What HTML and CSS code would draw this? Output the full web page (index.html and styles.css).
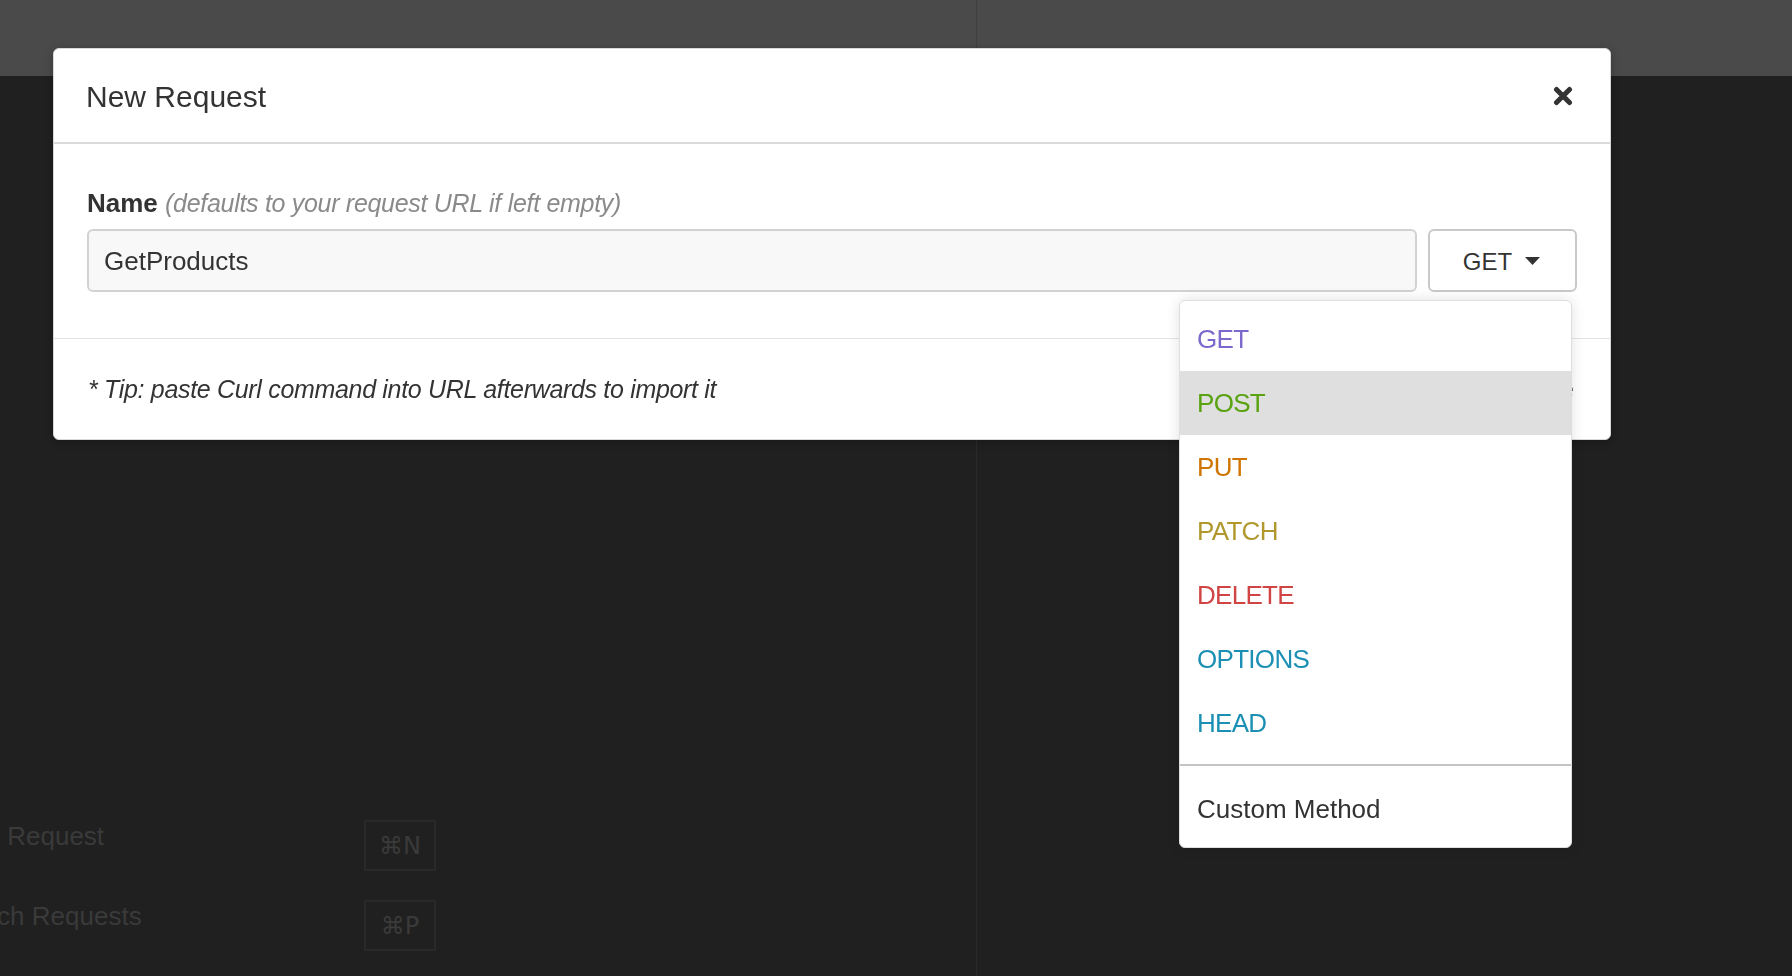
FILE: index.html
```html
<!DOCTYPE html>
<html lang="en">
<head>
<meta charset="utf-8">
<title>New Request</title>
<link rel="stylesheet" href="styles.css">
</head>
<body>
<div class="app">
  <section class="pane pane-left">
    <div class="pane-head"></div>
    <div class="pane-body">
      <div class="shortcuts">
        <div class="shortcut">
          <span class="shortcut-label">New Request</span>
          <span class="shortcut-key">⌘N</span>
        </div>
        <div class="shortcut">
          <span class="shortcut-label">Switch Requests</span>
          <span class="shortcut-key">⌘P</span>
        </div>
      </div>
    </div>
  </section>
  <section class="pane pane-right">
    <div class="pane-head"></div>
    <div class="pane-body"></div>
  </section>
</div>

<div class="overlay">
  <div class="modal">
    <header class="modal-head">
      <h1 class="modal-title">New Request</h1>
      <button class="modal-close" aria-label="Close">
        <svg width="20" height="20" viewBox="0 0 20 20"><path d="M3.5 3.5 L16.5 16.5 M16.5 3.5 L3.5 16.5" stroke="#333" stroke-width="5" stroke-linecap="round" fill="none"/></svg>
      </button>
    </header>
    <div class="modal-body">
      <label class="field-label"><strong>Name</strong> <em>(defaults to your request URL if left empty)</em></label>
      <div class="field-row">
        <div class="name-input">GetProducts</div>
        <div class="method-wrap">
          <button class="method-btn">GET <svg class="caret" width="15" height="8" viewBox="0 0 15 8"><path d="M0 0 H15 L7.5 8 Z" fill="#333"/></svg></button>
          <ul class="method-menu">
            <li class="m-get">GET</li>
            <li class="m-post active">POST</li>
            <li class="m-put">PUT</li>
            <li class="m-patch">PATCH</li>
            <li class="m-delete">DELETE</li>
            <li class="m-options">OPTIONS</li>
            <li class="m-head">HEAD</li>
            <li class="menu-sep"></li>
            <li class="m-custom">Custom Method</li>
          </ul>
        </div>
      </div>
    </div>
    <footer class="modal-foot">
      <span class="tip">* Tip: paste Curl command into URL afterwards to import it</span>
      <button class="create-btn">Create</button>
    </footer>
  </div>
</div>
</body>
</html>
```

FILE: styles.css
```css
* { box-sizing: border-box; }

html, body {
  margin: 0;
  padding: 0;
  width: 1792px;
  height: 976px;
  overflow: hidden;
  background: #202020;
  font-family: "Liberation Sans", Arial, sans-serif;
  color: #333;
}

.app {
  display: flex;
  height: 976px;
}

.pane {
  display: flex;
  flex-direction: column;
}

.pane-left {
  width: 977px;
}

.pane-right {
  flex: 1;
}

.pane-head {
  height: 76px;
  background: #4a4a4a;
}

.pane-left .pane-head {
  border-right: 1px solid #3f3f3f;
}

.pane-body {
  flex: 1;
  background: #202020;
}

.pane-left .pane-body {
  border-right: 1px solid #2a2a2a;
  overflow: hidden;
  padding-top: 744px;
}

.shortcuts {
  display: flex;
  flex-direction: column;
  gap: 29px;
  margin-left: -52px;
}

.shortcut {
  display: flex;
  align-items: flex-start;
}

.shortcut-label {
  width: 416px;
  font-size: 26px;
  line-height: 32px;
  color: #3a3a3a;
  white-space: nowrap;
}

.shortcut-key {
  width: 72px;
  height: 51px;
  border: 2px solid #292929;
  display: flex;
  align-items: center;
  justify-content: center;
  font-family: "DejaVu Sans", "Liberation Sans", sans-serif;
  font-size: 24px;
  color: #3a3a3a;
}

/* Modal */
.overlay {
  position: fixed;
  inset: 0;
  padding: 48px 0 0 53px;
}

.modal {
  position: relative;
  width: 1558px;
  background: #fff;
  border: 1px solid #d9d9d9;
  border-radius: 6px;
  box-shadow: 0 2px 10px rgba(0, 0, 0, 0.25);
}

.modal-head {
  height: 95px;
  border-bottom: 2px solid #dadada;
  display: flex;
  align-items: center;
  justify-content: space-between;
  padding: 3px 37px 0 32px;
}

.modal-title {
  margin: 0;
  font-size: 30px;
  font-weight: normal;
  color: #333;
}

.modal-close {
  border: 0;
  background: none;
  padding: 0;
  width: 20px;
  height: 20px;
  display: flex;
  margin-top: -3px;
}

.modal-body {
  padding: 43px 33px 46px 33px;
  border-bottom: 1px solid #e3e3e3;
}

.field-label {
  display: block;
  font-size: 26px;
  line-height: 32px;
  margin-bottom: 10px;
  color: #333;
}

.field-label strong {
  font-weight: bold;
  color: #333;
}

.field-label em {
  color: #8a8a8a;
  font-size: 25px;
  letter-spacing: -0.3px;
}

.field-row {
  display: flex;
  gap: 11px;
}

.name-input {
  flex: 1;
  height: 63px;
  background: #f8f8f8;
  border: 2px solid #d2d2d2;
  border-radius: 6px;
  padding: 1px 0 0 15px;
  display: flex;
  align-items: center;
  font-size: 26px;
  color: #333;
}

.method-wrap {
  position: relative;
}

.method-btn {
  width: 149px;
  height: 63px;
  background: #fff;
  border: 2px solid #c9c9c9;
  border-radius: 6px;
  display: flex;
  align-items: center;
  justify-content: center;
  gap: 13px;
  font-family: "Liberation Sans", Arial, sans-serif;
  font-size: 24px;
  color: #333;
  padding: 2px 2px 0 0;
}

.method-btn .caret {
  margin-top: -2px;
}

.method-menu {
  position: absolute;
  top: calc(100% + 8px);
  right: 5px;
  width: 393px;
  margin: 0;
  padding: 6px 0;
  list-style: none;
  background: #fff;
  border: 1px solid #dedede;
  border-radius: 6px;
  box-shadow: 0 0 14px rgba(0, 0, 0, 0.12);
  z-index: 10;
}

.method-menu li {
  height: 64px;
  display: flex;
  align-items: center;
  padding: 0 0 0 17px;
  font-size: 26px;
  letter-spacing: -0.7px;
}

.method-menu li.active {
  background: #dfdfdf;
}

.method-menu li.menu-sep {
  height: 2px;
  margin: 9px 0 11px;
  padding: 0;
  background: #c4c4c4;
}

.m-get { color: #7d69cb; }
.m-post { color: #59a210; }
.m-put { color: #d07502; }
.m-patch { color: #b0982c; }
.m-delete { color: #d04444; }
.m-options { color: #1c90b4; }
.m-head { color: #1c90b4; }
.method-menu li.m-custom { color: #333; letter-spacing: 0; }

.modal-foot {
  height: 100px;
  display: flex;
  align-items: center;
  justify-content: space-between;
  padding: 0 34px 0 34px;
}

.tip {
  font-style: italic;
  font-size: 25px;
  color: #333;
  letter-spacing: -0.32px;
}

.create-btn {
  border: 0;
  background: none;
  font-family: "Liberation Sans", Arial, sans-serif;
  font-size: 26px;
  color: #333;
  padding: 0 2px 0 0;
}
```
